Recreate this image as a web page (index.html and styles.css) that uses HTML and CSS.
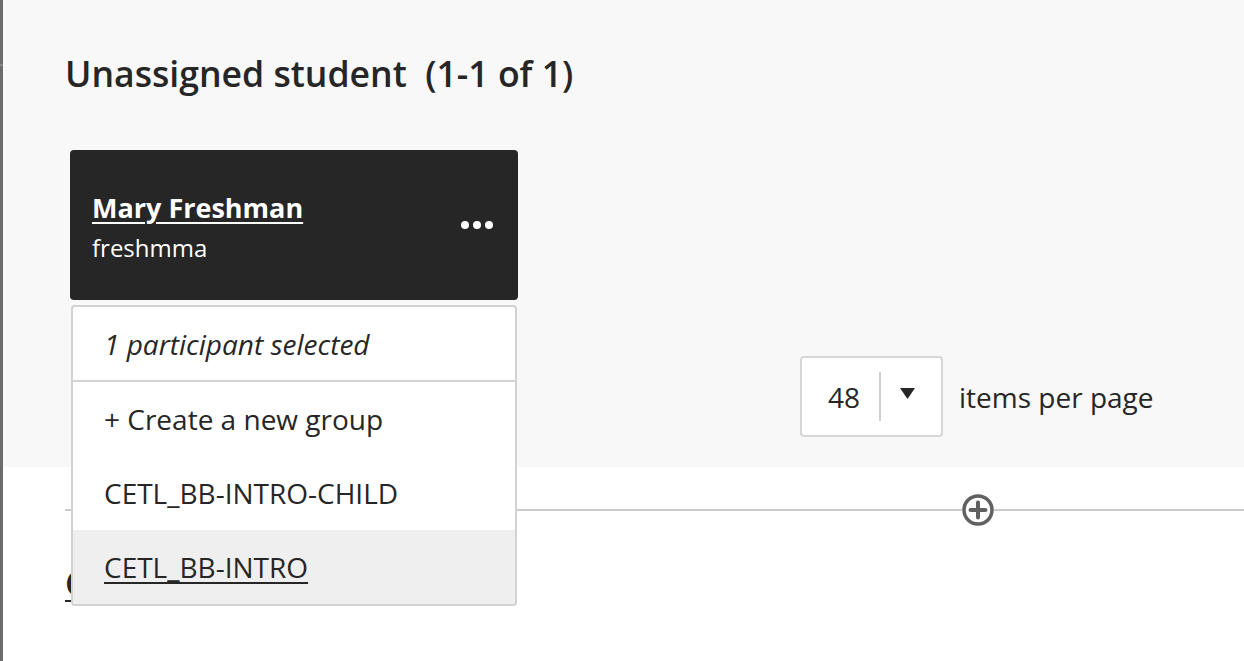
FILE: index.html
```html
<!DOCTYPE html>
<html lang="en">
<head>
<meta charset="utf-8">
<title>Unassigned student</title>
<link rel="stylesheet" href="styles.css">
</head>
<body>
<div class="page">
  <div class="edge"><div class="edge-mark"></div></div>
  <main class="main">
    <section class="unassigned">
      <h1 class="title">Unassigned student&nbsp; (1-1 of 1)</h1>
      <div class="card-wrap">
        <div class="card">
          <div class="card-text">
            <a class="card-name" href="#">Mary Freshman</a>
            <div class="card-user">freshmma</div>
          </div>
          <svg class="card-more" width="32" height="8" viewBox="0 0 32 8" aria-hidden="true">
            <circle cx="4" cy="4" r="4" fill="#fff"/>
            <circle cx="16" cy="4" r="4" fill="#fff"/>
            <circle cx="28" cy="4" r="4" fill="#fff"/>
          </svg>
        </div>
        <div class="menu">
          <div class="menu-head">1 participant selected</div>
          <div class="menu-item">+ Create a new group</div>
          <div class="menu-item">CETL_BB-INTRO-CHILD</div>
          <div class="menu-item menu-item-hover">CETL_BB-INTRO</div>
        </div>
      </div>
      <div class="pager">
        <div class="select">
          <span class="select-value">48</span>
          <span class="select-divider"></span>
          <svg class="select-arrow" width="15" height="11" viewBox="0 0 15 11" aria-hidden="true">
            <polygon points="0,0 15,0 7.5,11" fill="#262626"/>
          </svg>
        </div>
        <span class="pager-label">items per page</span>
      </div>
    </section>
    <section class="groups">
      <div class="add-row">
        <span class="add-line add-line-left"></span>
        <svg class="add-icon" width="32" height="32" viewBox="0 0 32 32" aria-hidden="true">
          <circle cx="16" cy="16" r="14" fill="#fff" stroke="#606060" stroke-width="3.5"/>
          <path d="M16 8.5v15M8.5 16h15" stroke="#606060" stroke-width="4" stroke-linecap="round"/>
        </svg>
        <span class="add-line add-line-right"></span>
      </div>
      <h2 class="groups-title"><a href="#">Groups</a></h2>
    </section>
  </main>
</div>
</body>
</html>
```
FILE: styles.css
```css
html, body {
  margin: 0;
  padding: 0;
  background: #ffffff;
}

body {
  font-family: "Open Sans", "Liberation Sans", sans-serif;
  color: #262626;
  overflow: hidden;
}

.page {
  display: flex;
  min-height: 661px;
}

.edge {
  width: 3px;
  flex: none;
  background: #6c6c6c;
  display: flex;
  flex-direction: column;
}

.edge-mark {
  margin-top: 64px;
  height: 2px;
  background: #8a8a8a;
}

.main {
  flex: 1;
  display: flex;
  flex-direction: column;
}

.unassigned {
  background: #f8f8f8;
  padding: 52px 0 30px 62px;
}

.title {
  margin: 0;
  font-size: 35.6px;
  line-height: 43px;
  font-weight: 600;
  color: #262626;
}

.card-wrap {
  position: relative;
  margin: 55px 0 0 5px;
  width: 448px;
}

.card {
  height: 150px;
  box-sizing: border-box;
  background: #262626;
  border-radius: 4px;
  padding: 40px 25px 0 22px;
  display: flex;
  align-items: flex-start;
  justify-content: space-between;
}

.card-text {
  display: flex;
  flex-direction: column;
}

.card-name {
  color: #ffffff;
  font-size: 27px;
  font-weight: 700;
  line-height: 35px;
  text-decoration: underline;
  text-underline-offset: 4px;
  text-decoration-thickness: 2px;
}

.card-user {
  color: #ffffff;
  font-size: 24px;
  line-height: 29px;
  margin-top: 8px;
}

.card-more {
  margin-top: 31px;
}

.menu {
  position: absolute;
  left: 1px;
  top: 155px;
  width: 446px;
  box-sizing: border-box;
  background: #ffffff;
  border: 2px solid #d2d2d2;
  border-radius: 4px;
  overflow: hidden;
  z-index: 2;
}

.menu-head {
  height: 73px;
  display: flex;
  align-items: center;
  padding-left: 31px;
  font-size: 28px;
  font-style: italic;
  border-bottom: 2px solid #d2d2d2;
}

.menu-item {
  height: 74px;
  display: flex;
  align-items: center;
  padding-left: 31px;
  font-size: 28px;
}

.menu-item-hover {
  background: #efefef;
  text-decoration: underline;
  text-underline-offset: 4px;
  text-decoration-thickness: 2px;
}

.pager {
  display: flex;
  align-items: center;
  margin: 56px 0 0 735px;
}

.select {
  width: 143px;
  height: 81px;
  box-sizing: border-box;
  background: #ffffff;
  border: 2px solid #d6d6d6;
  border-radius: 4px;
  display: flex;
  align-items: center;
  padding-left: 26px;
}

.select-value {
  font-size: 28px;
  width: 33px;
}

.select-divider {
  width: 2px;
  height: 49px;
  background: #cfcfcf;
  margin-left: 18px;
}

.select-arrow {
  margin-left: 19px;
  margin-top: -6px;
}

.pager-label {
  font-size: 28px;
  margin-left: 16px;
  color: #262626;
}

.groups {
  padding: 27px 0 0 62px;
}

.add-row {
  display: flex;
  align-items: center;
  height: 32px;
}

.add-line {
  height: 2px;
  background: #cccccc;
}

.add-line-left {
  width: 897px;
}

.add-line-right {
  flex: 1;
}

.add-icon {
  flex: none;
  display: block;
}

.groups-title {
  margin: 37px 0 0;
  font-size: 34px;
  line-height: 1.2;
  font-weight: 600;
}

.groups-title a {
  color: #262626;
  text-decoration: underline;
  text-underline-offset: 4px;
  text-decoration-thickness: 2px;
}
```
